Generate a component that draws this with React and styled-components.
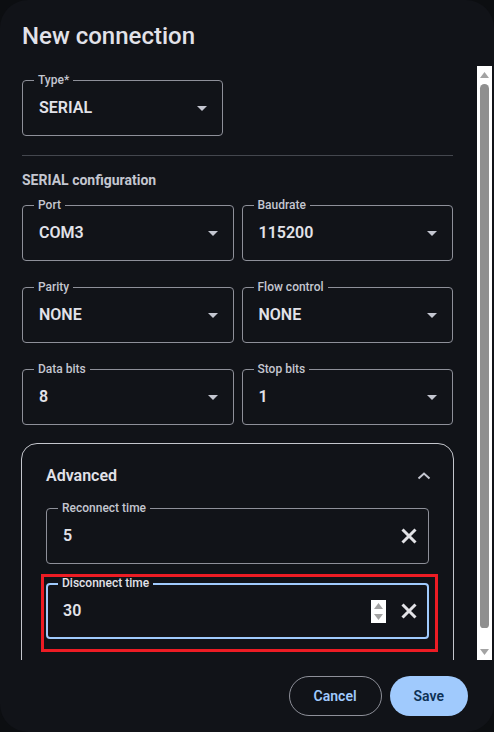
import styled, { createGlobalStyle } from "styled-components"

const GlobalStyle = createGlobalStyle`
    html, body {
        margin: 0;
        padding: 0;
        background: #0c0e11;
    }
    body {
        font-family: Roboto, "Noto Sans", sans-serif;
    }
    * {
        box-sizing: border-box;
    }
`

const Dialog = styled.div`
    width: 494px;
    height: 732px;
    background: #111318;
    border-radius: 28px;
    display: flex;
    flex-direction: column;
    overflow: hidden;
    color: #e2e2e9;
`

const Title = styled.h2`
    margin: 0;
    padding: 20px 22px 14px;
    font-size: 24px;
    line-height: 32px;
    font-weight: 500;
    color: #e2e2e9;
`

const Body = styled.div`
    flex: 1;
    min-height: 0;
    display: flex;
    margin-right: 2px;
`

const Content = styled.div`
    flex: 1;
    min-width: 0;
    overflow: hidden;
    padding: 14px 24px 0 22px;
`

// classic light scrollbar beside the scrolling content
const ScrollTrack = styled.div`
    width: 15px;
    background: #ffffff;
    display: flex;
    flex-direction: column;
    align-items: center;
`

const ScrollButton = styled.div`
    height: 17px;
    width: 15px;
    display: flex;
    align-items: center;
    justify-content: center;
`

const ScrollThumb = styled.div`
    flex: 1;
    width: 9px;
    margin: 1px 0 15px;
    background: #8f8f8f;
    border-radius: 5px 5px 4px 4px;
`

const Divider = styled.hr`
    margin: 19px 0 14px;
    border: none;
    height: 1px;
    background: #44474e;
`

const SectionTitle = styled.div`
    font-size: 14px;
    line-height: 20px;
    font-weight: 700;
    color: #c4c6d0;
    margin-bottom: 15px;
`

const Grid = styled.div`
    display: grid;
    grid-template-columns: 1fr 1fr;
    column-gap: 8px;
    row-gap: 26px;
`

const FieldBox = styled.div`
    position: relative;
    height: 56px;
    width: ${props => props.width || "auto"};
    border: ${props => props.focused ? "2px solid #a0cafd" : "1px solid #8e9099"};
    border-radius: 4px;
    display: flex;
    align-items: center;
    padding: 0 ${props => props.tight ? (props.focused ? "10px" : "11px") : "14px"} 0 ${props => props.focused ? "15px" : "16px"};
`

const FieldLabel = styled.span`
    position: absolute;
    top: ${props => props.focused ? "-9px" : "-8px"};
    left: ${props => props.focused ? "10px" : "11px"};
    padding: 0 4px;
    background: #111318;
    font-size: 12px;
    line-height: 14px;
    font-weight: 500;
    color: ${props => props.focused ? "#e2e2e9" : "#c4c6d0"};
`

const Value = styled.span`
    flex: 1;
    font-size: 16px;
    line-height: 24px;
    font-weight: 600;
    color: #e2e2e9;
`

const Caret = styled.span`
    width: 0;
    height: 0;
    border-left: 5px solid transparent;
    border-right: 5px solid transparent;
    border-top: 5px solid #c4c6d0;
    margin-right: 1px;
`

const Spinner = styled.span`
    width: 15px;
    height: 23px;
    background: #ffffff;
    display: flex;
    align-items: center;
    justify-content: center;
    margin-right: 15px;
`

const ClearIcon = () => (
    <svg width="16" height="16" viewBox="0 0 16 16">
        <path d="M1.5 1.5 L14.5 14.5 M14.5 1.5 L1.5 14.5" stroke="#e2e2e6" strokeWidth="3" />
    </svg>
)

const Highlight = styled.div`
    position: relative;
    margin-top: 19px;

    &::after {
        content: "";
        position: absolute;
        top: -9px;
        left: -5px;
        right: -9px;
        bottom: -13px;
        border: 3px solid #ed1c24;
        pointer-events: none;
    }
`

const Card = styled.div`
    margin: 18px -1px 0;
    border: 1px solid #c4c6cc;
    border-radius: 16px;
    padding: 20px 22px 40px 24px;
`

const CardHeader = styled.div`
    display: flex;
    align-items: center;
    justify-content: space-between;
    font-size: 16px;
    line-height: 24px;
    font-weight: 600;
    color: #e2e2e9;
    margin-bottom: 20px;
`

const CardFields = styled.div`
    margin-right: 2px;
`

const Footer = styled.div`
    display: flex;
    justify-content: flex-end;
    gap: 8px;
    padding: 16px 26px 16px;
`

const Button = styled.button`
    height: 40px;
    border-radius: 20px;
    font-family: Roboto, "Noto Sans", sans-serif;
    font-size: 14px;
    font-weight: 600;
    padding: 0 24px;
    cursor: pointer;
    border: ${props => props.primary ? "none" : "1px solid #8e9099"};
    background: ${props => props.primary ? "#a0cafd" : "transparent"};
    color: ${props => props.primary ? "#0e3256" : "#a0cafd"};
`

const Arrow = ({ up }) => (
    <svg width="9" height="6" viewBox="0 0 9 6">
        <path d={up ? "M0 6 L4.5 0 L9 6 Z" : "M0 0 L4.5 6 L9 0 Z"} fill="#a3a3a3" />
    </svg>
)

const Field = ({ label, value, kind = "select", focused, width }) => (
    <FieldBox focused={focused} width={width} tight={kind !== "select"}>
        <FieldLabel focused={focused}>{label}</FieldLabel>
        <Value>{value}</Value>
        {kind === "select" && <Caret />}
        {kind === "number" && (
            <Spinner>
                <svg width="11" height="21" viewBox="0 0 11 21">
                    <path d="M1 8 L5.5 2 L10 8 Z" fill="#a3a3a3" />
                    <path d="M1 13 L5.5 19 L10 13 Z" fill="#a3a3a3" />
                </svg>
            </Spinner>
        )}
        {kind !== "select" && <ClearIcon />}
    </FieldBox>
)

const App = () => {
    return (
        <Dialog>
            <GlobalStyle />
            <Title>New connection</Title>
            <Body>
                <Content>
                    <Field label="Type*" value="SERIAL" width="201px" />
                    <Divider />
                    <SectionTitle>SERIAL configuration</SectionTitle>
                    <Grid>
                        <Field label="Port" value="COM3" />
                        <Field label="Baudrate" value="115200" />
                        <Field label="Parity" value="NONE" />
                        <Field label="Flow control" value="NONE" />
                        <Field label="Data bits" value="8" />
                        <Field label="Stop bits" value="1" />
                    </Grid>
                    <Card>
                        <CardHeader>
                            Advanced
                            <svg width="14" height="10" viewBox="0 0 14 10">
                                <path d="M1.5 7.5 L7 2.5 L12.5 7.5" fill="none" stroke="#c4c6d0" strokeWidth="2" />
                            </svg>
                        </CardHeader>
                        <CardFields>
                            <Field label="Reconnect time" value="5" kind="clear" />
                            <Highlight>
                                <Field label="Disconnect time" value="30" kind="number" focused />
                            </Highlight>
                        </CardFields>
                    </Card>
                </Content>
                <ScrollTrack>
                    <ScrollButton><Arrow up /></ScrollButton>
                    <ScrollThumb />
                    <ScrollButton><Arrow /></ScrollButton>
                </ScrollTrack>
            </Body>
            <Footer>
                <Button>Cancel</Button>
                <Button primary>Save</Button>
            </Footer>
        </Dialog>
    )
}

export default App
